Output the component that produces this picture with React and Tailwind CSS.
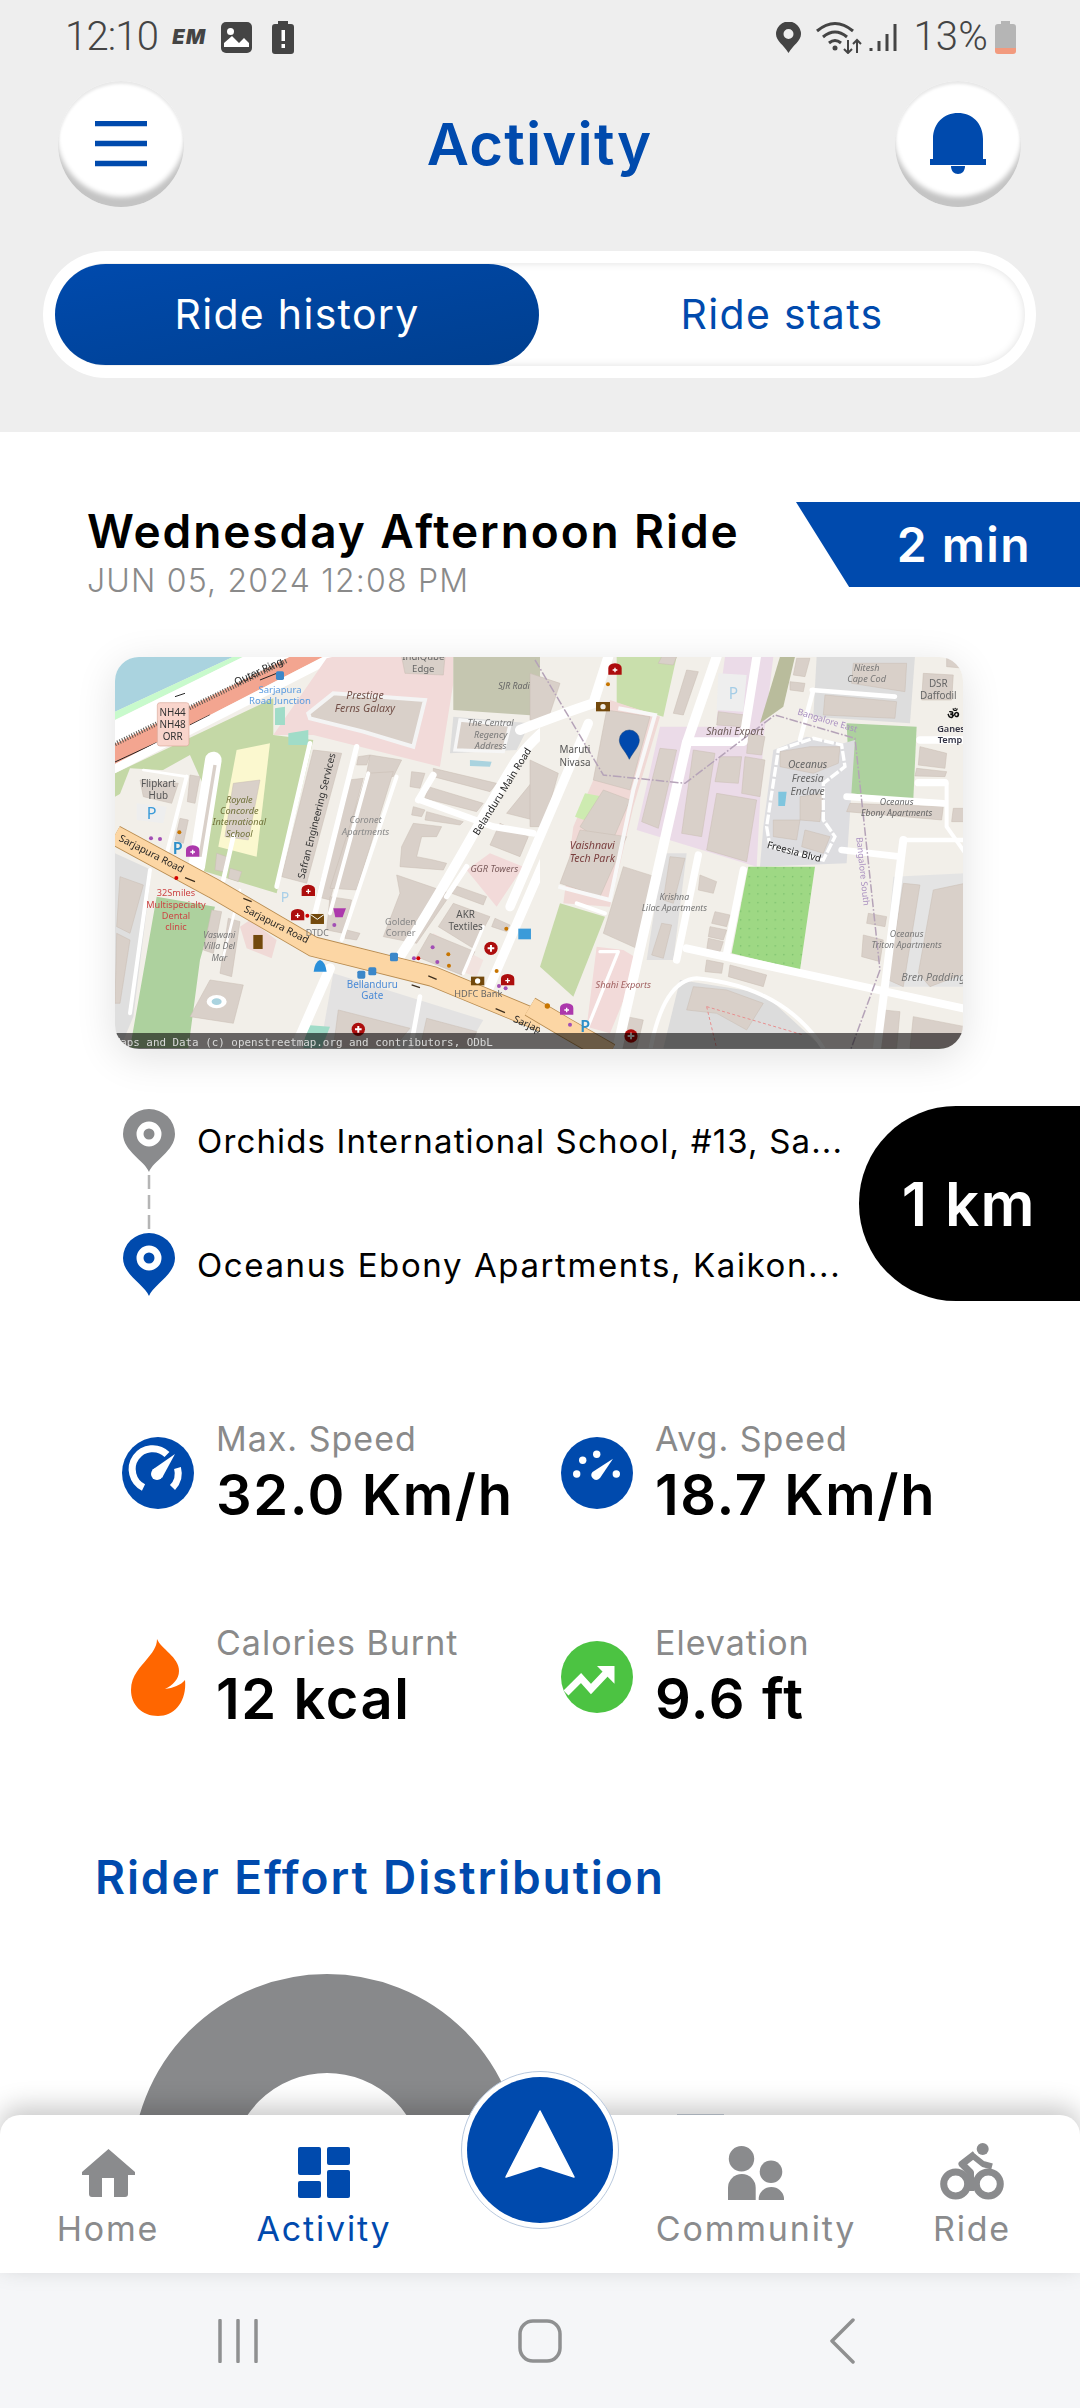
import React from 'react';

const BLUE = '#004aad';

const leftBuildings = [
  '905,50 1035,50 1030,105 915,100',
  '60,710 130,735 90,880 50,860',
  '50,880 90,900 60,1090 45,1090',
  '335,810 365,815 340,940 310,930',
  '385,835 420,845 395,1010 360,1000',
  '330,1020 430,1035 400,1150 270,1130',
  '270,405 300,410 285,490 262,485',
  '240,535 265,540 250,610 225,600',
  '350,640 380,650 370,695 345,690',
  '390,685 425,695 415,725 385,715',
  '120,420 235,430 215,490 130,470',
  '400,430 480,420 445,600 375,590',
  '640,330 725,340 620,730 545,710',
  '775,350 810,345 800,375 770,375',
  '810,345 905,360 880,410 800,400',
  '745,420 790,415 690,780 650,770',
  '800,400 880,395 770,750 690,745',
  '690,770 755,780 730,880 680,870',
  '740,870 780,880 770,900 735,895',
  '935,395 975,400 960,445 930,440',
  '1000,385 1190,430 1170,455 1000,410',
  '985,440 1150,490 1130,515 975,475',
  '940,500 975,510 965,530 935,525',
  '980,515 1090,545 1080,555 975,540',
  '940,550 1025,560 1010,590 965,590 950,650 1000,660 1040,670 1030,690 900,680 905,620',
  '890,705 1050,760 1040,780 950,910 850,890 900,760',
  '1060,790 1170,830 1120,925 1015,860',
  '1060,735 1160,770 1150,795 1055,760',
  '1200,550 1285,590 1260,650 1170,615',
  '1350,360 1350,480 1300,540 1220,520',
  '1185,835 1230,855 1220,875 1175,860',
  '990,880 1125,935 1085,1005 950,950',
  '715,1110 930,1165 880,1225 700,1225',
  '980,1135 1130,1175 1110,1225 960,1225',
];

const rightBuildings = [
  '230,210 360,230 300,450 190,420',
  '220,450 300,480 240,620 150,560',
  '150,570 290,590 210,770 90,730',
  '280,680 375,710 320,925 220,880',
  '395,50 440,50 430,75 385,70',
  '470,90 505,95 460,225 430,220',
  '390,325 440,330 385,565 335,545',
  '490,330 555,340 515,590 455,580',
  '570,350 635,350 625,430 555,425',
  '645,350 705,360 690,470 635,460',
  '560,460 680,480 650,665 530,630',
  '565,215 645,225 635,260 560,255',
  '655,280 705,290 695,345 650,340',
  '800,55 840,55 825,110 790,105',
  '780,125 825,130 820,155 780,150',
  '970,70 1130,70 1125,155 965,130',
  '885,165 1100,185 1095,235 880,225',
  '1180,100 1270,105 1265,180 1175,180',
  '1250,50 1305,50 1305,85 1250,80',
  '750,335 840,320 930,320 925,370 850,400 750,380',
  '810,470 880,460 870,545 810,540',
  '730,540 810,540 800,600 730,590',
  '825,570 900,590 880,640 815,620',
  '420,650 465,655 430,790 400,780',
  '395,850 425,855 400,955 365,945',
  '510,705 560,725 550,760 505,750',
  '555,815 600,825 590,860 545,850',
  '540,860 590,870 580,900 535,890',
  '535,895 580,905 570,935 530,930',
  '530,960 580,970 575,1000 525,995',
  '600,975 710,1005 700,1040 595,1010',
  '1120,730 1170,735 1120,1040 1075,1020',
  '1210,750 1305,730 1305,1000 1200,1040 1165,1000',
  '1015,820 1070,830 1065,860 1010,850',
  '1000,885 1060,900 1050,965 995,950',
  '1170,320 1250,340 1245,385 1165,375',
  '1160,385 1250,395 1245,410 1155,408',
  '960,490 1240,500 1235,540 950,515',
  '1270,505 1305,505 1305,545 1265,545',
  '490,1040 590,1050 700,1090 650,1170 560,1120 470,1110',
  '1060,1110 1110,1115 1100,1225 1050,1225',
  '1150,1130 1305,1160 1305,1225 1140,1225',
  '290,1130 340,1140 320,1225 270,1225',
  '0,100 90,130 50,250 0,240',
  '0,360 85,400 40,560 0,560',
];

const Building = ({ p }) => <polygon points={p} fill="#d9d0c9" stroke="#c8bdb3" strokeWidth="1.5" />;

const Road = ({ d, w = 24 }) => (
  <path d={d} fill="none" stroke="#fff" strokeWidth={w} strokeLinecap="round" strokeLinejoin="round" />
);

const Label = ({ x, y, c = '#777', s = 25, i, r, w, children }) => (
  <text
    x={x}
    y={y}
    fill={c}
    fontSize={s * 1.1}
    fontStyle={i ? 'italic' : 'normal'}
    fontWeight={w}
    textAnchor="middle"
    transform={r ? `rotate(${r} ${x} ${y})` : undefined}
  >
    {children}
  </text>
);

const Cross = ({ x, y, r = 20 }) => (
  <g>
    <circle cx={x} cy={y} r={r} fill="#ad0a0a" />
    <path d={`M${x - 10} ${y}H${x + 10}M${x} ${y - 10}V${y + 10}`} stroke="#fff" strokeWidth="6" />
  </g>
);

const Bag = ({ x, y, c = '#ad0a0a' }) => (
  <g>
    <path d={`M${x - 20} ${y + 16}V${y - 4}Q${x - 20} ${y - 16} ${x} ${y - 18}Q${x + 20} ${y - 16} ${x + 20} ${y - 4}V${y + 16}Z`} fill={c} />
    <path d={`M${x - 7} ${y + 2}H${x + 7}M${x} ${y - 5}V${y + 9}`} stroke="#fff" strokeWidth="4" />
  </g>
);

const Dot = ({ x, y, c = '#a24fb5', r = 6 }) => <circle cx={x} cy={y} r={r} fill={c} />;

const MapArt = () => (
  <svg viewBox="115 657 848 392" width="848" height="392" className="block">
    <defs>
      <filter id="soft"><feGaussianBlur stdDeviation="0.35" /></filter>
      <pattern id="dots" width="26" height="26" patternUnits="userSpaceOnUse">
        <circle cx="8" cy="8" r="2" fill="#6fb866" />
      </pattern>
      <clipPath id="leftClip"><rect x="45" y="50" width="1290" height="1175" /></clipPath>
    </defs>
    <g filter="url(#soft)" fontFamily="'Noto Sans', sans-serif">
      {/* left half, drawn in the coordinates of the left crop */}
      <g transform="translate(100 640) scale(0.3333)" clipPath="url(#leftClip)">
        <rect x="45" y="50" width="1305" height="1175" fill="#f2efe9" />
        <polygon points="45,50 400,50 45,215" fill="#aad3df" />
        <polygon points="400,50 430,50 45,240 45,215" fill="#c8facc" />
        <polygon points="45,400 520,175 520,285 640,300 530,760 300,690 330,480 270,345 45,470" fill="#c4d8a6" />
        <polygon points="90,385 270,395 215,620 45,570 45,500" fill="#f2efe9" />
        <polygon points="410,330 510,310 470,650 355,620" fill="#fbf8cf" />
        <polygon points="430,50 570,50 45,320 45,240" fill="#fff" />
        <polygon points="570,50 670,50 45,372 45,312" fill="#f3a590" />
        <path d="M45,312L560,62" stroke="#59564f" strokeWidth="14" strokeDasharray="3 5" fill="none" />
        <path d="M45,366L170,308M270,255L330,225M480,120L530,100M225,170L255,160" stroke="#222" strokeWidth="3" fill="none" />
        <polygon points="670,50 730,50 45,400 45,372" fill="#fff" />
        <polygon points="520,285 680,55 700,50 1060,50 1060,130 1020,380 640,285" fill="#f2dad9" />
        <polygon points="625,220 700,160 975,180 940,320 790,275 630,235" fill="#d9d0c9" stroke="#f4f4f4" strokeWidth="12" />
        <polygon points="565,280 625,270 625,315 565,315" fill="#a0dcc8" />
        <polygon points="525,205 555,200 555,255 525,255" fill="#a0dcc8" />
        <polygon points="1060,50 1350,50 1350,230 1060,210" fill="#c5c6b0" />
        <polygon points="1060,230 1290,250 1250,330 1050,340" fill="#dddddd" />
        <polygon points="1080,240 1230,255 1210,335 1065,330" fill="#d9d0c9" stroke="#f6f6f6" strokeWidth="10" />
        <polygon points="1110,360 1175,365 1170,380 1110,378" fill="#aad3df" />
        <polygon points="1100,690 1170,640 1270,680 1190,800" fill="#f2dad9" />
        <polygon points="45,640 155,690 100,1130 60,1225 45,1225" fill="#dfdfdf" />
        <polygon points="170,770 345,800 300,960 265,1225 90,1225" fill="#add19e" />
        <polygon points="420,860 450,840 530,900 515,955 440,925" fill="#f0d9d6" />
        <polygon points="700,1000 1150,1140 1100,1225 660,1225" fill="#e3e2e2" />
        <polygon points="620,1155 690,1160 665,1225 610,1225" fill="#a0dcc8" />
        <polygon points="110,490 200,500 190,550 110,540" fill="#eeeeee" />
        <polygon points="1000,880 1150,960 1130,1010 950,950" fill="#f2dad9" opacity="0.6" />
        {leftBuildings.map((p) => <Building key={p} p={p} />)}
        <Road d="M290,680 L340,360" w={50} />
        <path d="M300,650 L345,375" stroke="#d9d0c9" strokeWidth="10" fill="none" />
        <Road d="M400,590 L370,720" w={14} />
        <Road d="M260,410 L190,680" w={12} />
        <Road d="M130,390 L260,410" w={8} />
        <Road d="M630,310 L530,740" w={14} />
        <Road d="M770,320 L640,840" w={16} />
        <Road d="M805,400 L690,820" w={12} />
        <Road d="M890,410 L725,900" w={12} />
        <Road d="M900,950 C1050,720 1150,520 1250,360 C1280,320 1320,280 1360,250" w={30} />
        <Road d="M960,480 L1180,560 L1300,580" w={20} />
        <Road d="M1000,405 L955,480" w={20} />
        <Road d="M1040,770 L1100,680" w={16} />
        <Road d="M1160,1060 L1360,600" w={28} />
        <Road d="M1150,860 L1090,1000" w={10} />
        <Road d="M150,690 L90,1120" w={12} />
        <Road d="M580,1235 L690,985" w={30} />
        <Road d="M930,1235 L960,1070" w={14} />
        <Road d="M420,750 L370,950" w={8} />
        <path d="M45,585 L340,745 L640,920 L1000,1010 L1350,1155 L1500,1240" fill="none" stroke="#b98d52" strokeWidth="62" />
        <path d="M45,585 L340,745 L640,920 L1000,1010 L1350,1155 L1500,1240" fill="none" stroke="#fcd6a4" strokeWidth="57" />
        <path d="M430,775l25,10M960,1043l-25,-8M985,1008l25,10M285,725l-30,-12M1215,1118l-28,-12" stroke="#3d2f1f" strokeWidth="4" fill="none" />

        <Label x={480} y={104} c="#222" s={28} r={-25}>Outer Ring</Label>
        <rect x="172" y="188" width="95" height="130" rx="8" fill="#f9d5cc" stroke="#d9a99a" strokeWidth="2" />
        <Label x={218} y={228} c="#333" s={27}>NH44</Label>
        <Label x={218} y={264} c="#333" s={27}>NH48</Label>
        <Label x={218} y={300} c="#333" s={27}>ORR</Label>
        <Label x={540} y={160} c="#5a9be0" s={26}>Sarjapura</Label>
        <Label x={540} y={193} c="#5a9be0" s={26}>Road Junction</Label>
        <rect x="528" y="94" width="24" height="26" rx="5" fill="#3b87c9" />
        <Label x={795} y={177} c="#735048" s={29} i>Prestige</Label>
        <Label x={795} y={216} c="#735048" s={29} i>Ferns Galaxy</Label>
        <Label x={970} y={60} c="#666" s={26}>IndiQube</Label>
        <Label x={970} y={97} c="#666" s={26}>Edge</Label>
        <Label x={1270} y={148} c="#666" s={24} i>SJR Radiance</Label>
        <Label x={1172} y={258} c="#777" s={25} i>The Central</Label>
        <Label x={1172} y={293} c="#777" s={25} i>Regency</Label>
        <Label x={1172} y={326} c="#777" s={25} i>Address</Label>
        <Label x={1215} y={460} c="#222" s={27} r={-58}>Belanduru Main Road</Label>
        <Label x={175} y={441} c="#555" s={27}>Flipkart</Label>
        <Label x={175} y={477} c="#555" s={27}>Hub</Label>
        <Label x={155} y={537} c="#3a9bd9" s={44}>P</Label>
        <Label x={233} y={642} c="#2d8fc9" s={44} w={600}>P</Label>
        <Bag x={278} y={634} c="#ac39ac" />
        <Dot x={153} y={595} />
        <Dot x={180} y={597} />
        <Dot x={238} y={577} c="#c77400" />
        <Label x={418} y={490} c="#6f7038" s={25} i>Royale</Label>
        <Label x={418} y={523} c="#6f7038" s={25} i>Concorde</Label>
        <Label x={418} y={556} c="#6f7038" s={25} i>International</Label>
        <Label x={418} y={590} c="#6f7038" s={25} i>School</Label>
        <Label x={660} y={530} c="#333" s={27} r={-76}>Safran Engineering Services</Label>
        <Label x={797} y={550} c="#888" s={25} i>Coronet</Label>
        <Label x={797} y={584} c="#888" s={25} i>Apartments</Label>
        <Label x={150} y={650} c="#222" s={27} r={27}>Sarjapura Road</Label>
        <Label x={525} y={862} c="#222" s={27} r={27}>Sarjapura Road</Label>
        <Label x={1300} y={1172} c="#222" s={27} r={24}>Sarjapura</Label>
        <Label x={228} y={768} c="#c44" s={25}>32Smiles</Label>
        <Label x={228} y={803} c="#c44" s={25}>Multispecialty</Label>
        <Label x={228} y={836} c="#c44" s={25}>Dental</Label>
        <Label x={228} y={870} c="#c44" s={25}>clinic</Label>
        <Dot x={229} y={714} c="#d40000" />
        <Label x={358} y={895} c="#777" s={24} i>Vaswani</Label>
        <Label x={358} y={928} c="#777" s={24} i>Villa Del</Label>
        <Label x={358} y={962} c="#777" s={24} i>Mar</Label>
        <rect x="460" y="885" width="28" height="42" fill="#734a08" />
        <ellipse cx="350" cy="1085" rx="30" ry="20" fill="#fff" />
        <ellipse cx="350" cy="1085" rx="15" ry="10" fill="#aad3df" />
        <Bag x={625} y={752} />
        <Bag x={593} y={825} />
        <Dot x={622} y={827} c="#d40000" />
        <rect x="632" y="822" width="40" height="30" fill="#734a08" />
        <path d="M632 824L652 838L672 824" stroke="#fff" strokeWidth="3" fill="none" />
        <path d="M700 805H738L728 832H706Z" fill="#ac39ac" />
        <Dot x={703} y={855} />
        <Label x={652} y={888} c="#777" s={24}>DTDC</Label>
        <Label x={555} y={785} c="#a9cfe8" s={38}>P</Label>
        <Label x={1183} y={696} c="#7a5a5a" s={25} i>GGR Towers</Label>
        <Label x={1097} y={835} c="#555" s={27}>AKR</Label>
        <Label x={1097} y={870} c="#555" s={27}>Textiles</Label>
        <Label x={902} y={855} c="#888" s={25}>Golden</Label>
        <Label x={902} y={889} c="#888" s={25}>Corner</Label>
        <Cross x={1173} y={925} />
        <Cross x={775} y={1168} />
        <Bag x={1223} y={1020} />
        <Dot x={998} y={922} />
        <Dot x={1012} y={966} />
        <Dot x={1045} y={943} c="#c77400" />
        <Dot x={1047} y={977} c="#c77400" />
        <Dot x={942} y={955} />
        <Dot x={955} y={955} c="#d40000" />
        <Dot x={1219} y={866} c="#c77400" />
        <Dot x={1190} y={993} c="#c77400" />
        <Dot x={1197} y={1038} />
        <Dot x={1217} y={1045} />
        <rect x="1255" y="866" width="38" height="32" fill="#3b9bd9" />
        <rect x="1113" y="1010" width="40" height="26" fill="#734a08" />
        <circle cx="1133" cy="1023" r="8" fill="#fff" />
        <Label x={1135} y={1070} c="#666" s={25}>HDFC Bank</Label>
        <rect x="870" y="938" width="24" height="26" rx="5" fill="#3b87c9" />
        <rect x="772" y="992" width="24" height="24" rx="5" fill="#3b87c9" />
        <rect x="805" y="982" width="24" height="24" rx="5" fill="#3b87c9" />
        <Label x={817} y={1043} c="#4a8ad6" s={27}>Bellanduru</Label>
        <Label x={817} y={1077} c="#4a8ad6" s={27}>Gate</Label>
        <path d="M641 995Q645 965 660 960Q676 965 680 995Z" fill="#2a8fd9" />
      </g>

      {/* right half, drawn in the coordinates of the right crop */}
      <g transform="translate(530 640) scale(0.3333)">
        <rect x="30" y="50" width="1275" height="1175" fill="#f2efe9" />
        <polygon points="260,50 440,50 400,230 260,190" fill="#c9dfac" />
        <polygon points="190,420 240,180 390,230 310,500 240,800 100,790 130,560" fill="#f0d9d6" />
        <polygon points="390,260 560,260 690,50 730,50 700,300 680,680 320,570" fill="#ebdbe8" />
        <polygon points="585,50 670,50 650,240 560,240" fill="#ebdbe8" />
        <polygon points="565,100 650,105 640,215 560,210" fill="#eeeeee" />
        <polygon points="750,50 795,50 760,200 690,250" fill="#b9bc9c" />
        <polygon points="860,50 1155,50 1140,250 850,230" fill="#dddddd" />
        <polygon points="950,250 1160,260 1150,480 960,460" fill="#add19e" />
        <polygon points="730,330 830,290 940,310 975,300 950,670 690,680 700,560" fill="#dddde0" />
        <polygon points="655,680 855,680 810,990 605,940" fill="#9ed884" />
        <polygon points="655,680 855,680 810,990 605,940" fill="url(#dots)" />
        <polygon points="165,460 220,470 190,550 135,530" fill="#cdebb0" />
        <polygon points="90,790 225,830 130,1070 30,980" fill="#c6d9a8" />
        <polygon points="200,920 280,930 330,960 240,1180 170,1160" fill="#f2dad9" />
        <polygon points="400,1225 450,1020 700,1060 880,1225" fill="#dcdcdc" />
        <polygon points="1090,710 1305,700 1305,1040 1060,1040" fill="#e4e4e4" />
        <polygon points="400,640 470,640 430,960 350,960" fill="#e0dfdf" />
        {rightBuildings.map((p) => <Building key={p} p={p} />)}
        <polygon points="745,455 770,455 765,498 745,498" fill="#7fc5de" />
        <path d="M745,330 L850,295 L935,315 L945,380 L880,430 L880,540 L915,590 L880,660 L720,620 L710,560 Z" fill="none" stroke="#fff" strokeWidth="10" strokeDasharray="30 6" />
        <path d="M265,205 L375,225 L310,450 L240,780 L85,740" fill="none" stroke="#f8f8f8" strokeWidth="12" />
        <Road d="M-30,270 Q100,220 190,190 L235,50" w={30} />
        <Road d="M-60,800 L175,250" w={28} />
        <Road d="M560,50 L470,310 L260,1235" w={30} />
        <Road d="M680,50 L640,300" w={26} />
        <Road d="M470,305 L640,305" w={26} />
        <Road d="M845,150 L1095,170" w={14} />
        <Road d="M850,150 L810,300" w={14} />
        <Road d="M640,690 L590,940" w={22} />
        <Road d="M505,645 L440,960" w={22} />
        <Road d="M470,925 L1320,1110" w={24} />
        <Road d="M950,470 L1240,490" w={20} />
        <Road d="M935,630 L1110,650" w={20} />
        <Road d="M1120,600 L1040,1235" w={24} />
        <Road d="M1120,600 L1305,600" w={14} />
        <Road d="M1170,300 L1320,300" w={22} />
        <Road d="M1165,428 L1245,428" w={22} />
        <Road d="M1250,430 L1250,560 L1320,660" w={12} />
        <Road d="M360,1235 Q400,1020 500,1015 Q760,1040 880,1225" w={12} />
        <Road d="M140,790 L225,820" w={12} />
        <Road d="M210,935 L265,935 L170,1170" w={10} />
        <path d="M0,1100 L110,1165 L240,1240" fill="none" stroke="#b98d52" strokeWidth="62" />
        <path d="M0,1100 L110,1165 L240,1240" fill="none" stroke="#fcd6a4" strokeWidth="57" />
        <path d="M530,1100 L560,1225 M530,1100 L820,1185" fill="none" stroke="#e78f8f" strokeWidth="3" strokeDasharray="9 7" />
        <path d="M15,60 L220,405 L465,430 L735,225 L975,295 L1050,990 L960,1235" fill="none" stroke="#b5a3b8" strokeWidth="4.5" strokeDasharray="26 6 5 6" />
        <Bag x={255} y={88} />
        <Dot x={234} y={133} c="#c77400" />
        <rect x="198" y="186" width="42" height="28" fill="#734a08" />
        <circle cx="219" cy="200" r="8" fill="#f2efe9" />
        <Label x={610} y={178} c="#a5cde6" s={42}>P</Label>
        <Label x={615} y={285} c="#6b5a57" s={28} i>Shahi Export</Label>
        <Label x={890} y={250} c="#a98fc0" s={24} r={17}>Bangalore East</Label>
        <Label x={1010} y={92} c="#777" s={25} i>Nitesh</Label>
        <Label x={1010} y={125} c="#777" s={25} i>Cape Cod</Label>
        <Label x={1225} y={142} c="#666" s={27}>DSR</Label>
        <Label x={1225} y={178} c="#666" s={27}>Daffodil</Label>
        <Label x={1270} y={238} c="#111" s={34} w={700}>ॐ</Label>
        <Label x={1272} y={276} c="#334" s={25} w={600}>Ganesh</Label>
        <Label x={1272} y={310} c="#334" s={25} w={600}>Temple</Label>
        <Label x={135} y={340} c="#555" s={27}>Maruti</Label>
        <Label x={135} y={378} c="#555" s={27}>Nivasa</Label>
        <Label x={833} y={385} c="#666" s={28} i>Oceanus</Label>
        <Label x={833} y={425} c="#666" s={28} i>Freesia</Label>
        <Label x={833} y={465} c="#666" s={28} i>Enclave</Label>
        <Label x={1100} y={494} c="#666" s={24} i>Oceanus</Label>
        <Label x={1100} y={527} c="#666" s={24} i>Ebony Apartments</Label>
        <Label x={790} y={645} c="#222" s={27} r={15}>Freesia Blvd</Label>
        <Label x={990} y={695} c="#a98fc0" s={24} r={84}>Bangalore South</Label>
        <Label x={187} y={627} c="#7a3e3e" s={29} i>Vaishnavi</Label>
        <Label x={187} y={667} c="#7a3e3e" s={29} i>Tech Park</Label>
        <Label x={433} y={780} c="#777" s={24} i>Krishna</Label>
        <Label x={433} y={813} c="#777" s={24} i>Lilac Apartments</Label>
        <Label x={1130} y={892} c="#777" s={24} i>Oceanus</Label>
        <Label x={1130} y={925} c="#777" s={24} i>Triton Apartments</Label>
        <Label x={1210} y={1022} c="#777" s={29} i>Bren Padding</Label>
        <Label x={280} y={1045} c="#a06060" s={25} i>Shahi Exports</Label>
        <Bag x={110} y={1108} c="#ac39ac" />
        <Dot x={52} y={1098} c="#c77400" r={8} />
        <Dot x={120} y={1154} />
        <Label x={166} y={1176} c="#2d8fc9" s={44} w={600}>P</Label>
        <Cross x={303} y={1188} />
        <path d="M298 358C285 330 268 320 268 300a30 30 0 1 1 60 0C328 320 310 335 298 358Z" fill={BLUE} stroke="#0b3a7a" strokeWidth="1.5" />
      </g>
      <rect x="115" y="1033" width="848" height="16" fill="#000" opacity="0.58" />
      <g transform="translate(100 640) scale(0.3333)">
        <text x="41" y="1217" fill="#d8d8d8" fontSize="32.6" fontFamily="'DejaVu Sans Mono', monospace">Maps and Data (c) openstreetmap.org and contributors, ODbL</text>
      </g>
    </g>
  </svg>
);

const StatusBar = () => (
  <div className="h-[74px] flex items-center justify-between pl-[65px] pr-[64px] font-['Roboto',sans-serif] text-[#444444]">
    <div className="flex items-center">
      <span className="text-[40px] leading-none font-light tracking-[-0.8px]">12:10</span>
      <span className="ml-[14px] w-[38px] text-[20px] font-black italic leading-none tracking-[1.5px] font-['Inter',sans-serif]">EM</span>
      <svg width="31" height="31" viewBox="0 0 31 31" className="ml-[11px]">
        <rect width="31" height="31" rx="5" fill="#444" />
        <circle cx="9.500" cy="9.500" r="3.500" fill="#fff" />
        <path d="M3 23V21L11 14L18 21L23 16L28 21V26H3Z" fill="#fff" />
        <rect x="3" y="25" width="25" height="2" fill="#444" />
      </svg>
      <svg width="22" height="33" viewBox="0 0 22 33" className="ml-[20px]">
        <path d="M6 0H16V3H19Q22 3 22 6V30Q22 33 19 33H3Q0 33 0 30V6Q0 3 3 3H6Z" fill="#444" />
        <rect x="9.500" y="9" width="3.500" height="11" fill="#fff" />
        <rect x="9.500" y="23" width="3.500" height="4" fill="#fff" />
      </svg>
    </div>
    <div className="flex items-center">
      <svg width="25" height="31" viewBox="0 0 25 31">
        <path fillRule="evenodd" d="M12.500 31C8 23 0 19 0 12a12.500 12.500 0 0 1 25 0c0 7-8 11-12.500 19ZM12.500 7a5 5 0 1 0 0 10a5 5 0 0 0 0-10Z" fill="#444" />
      </svg>
      <svg width="46" height="34" viewBox="0 0 46 34" className="ml-[15px]">
        <path d="M1 11Q19-4 37 11M7 17Q19 7 31 17M13 23Q19 18 25 23" fill="none" stroke="#444" strokeWidth="3" />
        <circle cx="19" cy="28" r="2.500" fill="#444" />
        <path d="M32 20V33M28 29L32 33L36 29M41 33V20M37 24L41 20L45 24" fill="none" stroke="#444" strokeWidth="2" />
      </svg>
      <svg width="31" height="30" viewBox="0 0 31 30" className="ml-[7px]">
        <path d="M2 26V29M10 19V29M18 12V29M26 2V29" stroke="#444" strokeWidth="3" />
      </svg>
      <span className="ml-[13px] text-[40px] leading-none font-light tracking-[0.2px]">13%</span>
      <svg width="21" height="33" viewBox="0 0 21 33" className="ml-[7px]">
        <path d="M6 0H15V3H18Q21 3 21 6V27H0V6Q0 3 3 3H6Z" fill="#b5b5b5" />
        <path d="M0 27H21V30Q21 33 18 33H3Q0 33 0 30Z" fill="#f29a7e" />
      </svg>
    </div>
  </div>
);

const RoundButton = ({ children }) => (
  <button className="w-[126px] h-[126px] rounded-full bg-white flex items-center justify-center shadow-[inset_0_-12px_5px_-2px_#c4c4c4,inset_0_3px_3px_#e8e8e8]">
    {children}
  </button>
);

const Pin = ({ color }) => (
  <svg width="52" height="63" viewBox="0 0 52 63" className="shrink-0">
    <path d="M26 63C22 52 0 42 0 25a26 25 0 0 1 52 0C52 42 30 52 26 63Z" fill={color} />
    <circle cx="26" cy="25" r="9" fill="none" stroke="#fff" strokeWidth="7" />
  </svg>
);

const MaxSpeedIcon = () => (
  <svg width="72" height="72" viewBox="0 0 72 72">
    <circle cx="36" cy="36" r="36" fill={BLUE} />
    <path d="M21.500 50.500A20.500 20.500 0 1 1 45 17.500" fill="none" stroke="#fff" strokeWidth="7" />
    <path d="M55.500 31A20.500 20.500 0 0 1 50.500 50.500" fill="none" stroke="#fff" strokeWidth="7" />
    <circle cx="35" cy="37" r="6" fill="#fff" />
    <path d="M53 17L40 41L30 33Z" fill="#fff" />
  </svg>
);

const AvgSpeedIcon = () => (
  <svg width="72" height="72" viewBox="0 0 72 72">
    <circle cx="36" cy="36" r="36" fill={BLUE} />
    <circle cx="35.700" cy="17.300" r="3.700" fill="#fff" />
    <circle cx="21.700" cy="23.300" r="3.700" fill="#fff" />
    <circle cx="15.700" cy="37" r="3.700" fill="#fff" />
    <circle cx="55.300" cy="37" r="3.700" fill="#fff" />
    <path d="M52 21.700L39 41Q35 45 31.500 41Q29 38 31.500 35Z" fill="#fff" />
  </svg>
);

const FlameIcon = () => (
  <svg width="55" height="77" viewBox="0 0 55 77">
    <path d="M26 0C30 10 48 18 48 32C48 40 42 46 34 50C42 49 50 46 54 41C56 62 44 77 27 77C11 77 0 66 0 51C0 36 10 28 16 20C21 14 26 8 26 0Z" fill="#ff6600" />
  </svg>
);

const ElevationIcon = () => (
  <svg width="72" height="72" viewBox="0 0 72 72">
    <circle cx="36" cy="36" r="36" fill="#4cc342" />
    <path d="M5 52L20 37L30 48L47 30" fill="none" stroke="#fff" strokeWidth="7" />
    <path d="M36 25H53.500V42.700Z" fill="#fff" />
  </svg>
);

const Stat = ({ icon, label, value }) => (
  <div className="flex items-center">
    <div className="w-[72px] flex justify-center shrink-0">{icon}</div>
    <div className="ml-[22px]">
      <div className="text-[34px] leading-[40px] text-[#8a8a8a] tracking-[1px]">{label}</div>
      <div className="mt-[4px] text-[56px] leading-[64px] font-semibold text-black tracking-[1.6px]">{value}</div>
    </div>
  </div>
);

const NavItem = ({ icon, label, active }) => (
  <div className={`flex flex-col items-center ${active ? 'text-[#004aad]' : 'text-[#8a8b8d]'}`}>
    <div className="h-[60px] flex items-end justify-center">{icon}</div>
    <span className="mt-[9px] text-[34px] leading-[40px] tracking-[1.8px]">{label}</span>
  </div>
);

const HomeIcon = () => (
  <svg width="53" height="48" viewBox="0 0 53 48" className="mb-[3px]">
    <path fillRule="evenodd" d="M26.500 0L53 23V26H46V45Q46 48 43 48H10Q7 48 7 45V26H0V23ZM20 29V48H32V29Z" fill="currentColor" />
  </svg>
);

const ActivityIcon = () => (
  <svg width="52" height="51" viewBox="0 0 52 51" className="mb-[2px]">
    <rect width="23" height="28" rx="2" fill="currentColor" />
    <rect x="29" width="23" height="18" rx="2" fill="currentColor" />
    <rect y="34" width="23" height="17" rx="2" fill="currentColor" />
    <rect x="29" y="23" width="23" height="28" rx="2" fill="currentColor" />
  </svg>
);

const CommunityIcon = () => (
  <svg width="57" height="54" viewBox="0 0 57 54">
    <circle cx="13.500" cy="12.700" r="12.700" fill="currentColor" />
    <path d="M0 54V42A13.800 14 0 0 1 27.700 42V54Z" fill="currentColor" />
    <circle cx="43" cy="25.700" r="11.300" fill="currentColor" />
    <path d="M30.700 54V52A12.700 12 0 0 1 56 52V54Z" fill="currentColor" />
  </svg>
);

const RideIcon = () => (
  <svg width="64" height="57" viewBox="0 0 64 57">
    <circle cx="15.700" cy="41" r="12" fill="none" stroke="currentColor" strokeWidth="7" />
    <circle cx="48.300" cy="41" r="12" fill="none" stroke="currentColor" strokeWidth="7" />
    <circle cx="42.700" cy="6" r="6" fill="currentColor" />
    <path d="M35 11L22 21L30.500 29.500V48" fill="none" stroke="currentColor" strokeWidth="7" strokeLinejoin="round" />
    <path d="M33 13L43 21L52 23.500" fill="none" stroke="currentColor" strokeWidth="6" strokeLinejoin="round" />
  </svg>
);

export default function App() {
  return (
    <div className="relative w-[1080px] h-[2408px] overflow-hidden flex flex-col bg-white font-['Inter',sans-serif]">
      <header className="h-[432px] shrink-0 bg-[#eeeeee]">
        <StatusBar />
        <div className="mt-[7px] flex items-center justify-between pl-[58px] pr-[59px]">
          <RoundButton>
            <svg width="52" height="46" viewBox="0 0 52 46" className="mb-[1px]">
              <path d="M0 2.500H52M0 22.500H52M0 42.500H52" stroke={BLUE} strokeWidth="5.500" />
            </svg>
          </RoundButton>
          <h1 className="text-[58px] leading-none font-semibold text-[#004aad] tracking-[1.2px]">Activity</h1>
          <RoundButton>
            <svg width="56" height="61" viewBox="0 0 56 61" className="mb-[2px]">
              <path d="M3 46V26C3 10 14 0 28 0C42 0 53 10 53 26V46H56V52H0V46Z" fill={BLUE} />
              <path d="M21 53H35C35 58 32 61 28 61C24 61 21 58 21 53Z" fill={BLUE} />
            </svg>
          </RoundButton>
        </div>
        <div className="mt-[44px] ml-[43px] w-[993px] h-[127px] rounded-full bg-white py-[12px] pl-[12px] pr-[11px]">
          <div className="flex h-[103px] rounded-full shadow-[inset_0_0_9px_rgba(0,0,0,0.13)]">
            <div className="w-[484px] h-[101px] mt-[1px] rounded-full flex items-center justify-center bg-gradient-to-br from-[#004aad] to-[#003f8f] text-white text-[41px] tracking-[1.3px]">
              Ride history
            </div>
            <div className="flex-1 flex items-center justify-center text-[#004aad] text-[41px] tracking-[1.3px]">
              Ride stats
            </div>
          </div>
        </div>
      </header>

      <main className="flex-1 min-h-0 overflow-hidden">
        <div className="mt-[70px] flex items-start justify-between">
          <div className="ml-[87px]">
            <div className="text-[46px] leading-[58px] font-semibold text-black tracking-[1.9px]">Wednesday Afternoon Ride</div>
            <div className="text-[32px] leading-[40px] mt-[1px] font-light text-[#8a8a8a] tracking-[1.2px]">JUN 05, 2024 12:08 PM</div>
          </div>
          <div className="w-[284px] h-[85px] bg-[#004aad] [clip-path:polygon(0_0,100%_0,100%_100%,18.7%_100%)] flex items-center justify-end pr-[49px] text-white text-[48px] font-semibold tracking-[1.4px]">
            2 min
          </div>
        </div>

        <div className="mt-[56px] ml-[115px] w-[848px] h-[392px] rounded-[24px] overflow-hidden shadow-[0_8px_40px_rgba(0,0,0,0.12)]">
          <MapArt />
        </div>

        <div className="mt-[57px] flex items-start justify-between">
          <div className="ml-[123px] mt-[3px]">
            <div className="flex items-center gap-[22px]">
              <Pin color="#8a8b8d" />
              <span className="text-[33px] leading-[40px] text-black tracking-[1.15px]">Orchids International School, #13, Sa...</span>
            </div>
            <svg width="52" height="61" viewBox="0 0 52 61" className="block">
              <path d="M26 3V61" stroke="#b5b5b5" strokeWidth="2.500" strokeDasharray="14 6" />
            </svg>
            <div className="flex items-center gap-[22px]">
              <Pin color="#004aad" />
              <span className="text-[33px] leading-[40px] text-black tracking-[1.6px]">Oceanus Ebony Apartments, Kaikon...</span>
            </div>
          </div>
          <div className="w-[221px] h-[195px] rounded-l-[97px] bg-black flex items-center justify-end pr-[44px] text-white text-[60px] font-semibold tracking-[1.4px]">
            1 km
          </div>
        </div>

        <div className="mt-[118px] ml-[122px] grid grid-cols-[439px_1fr] gap-y-[96px]">
          <Stat icon={<MaxSpeedIcon />} label="Max. Speed" value="32.0 Km/h" />
          <Stat icon={<AvgSpeedIcon />} label="Avg. Speed" value="18.7 Km/h" />
          <Stat icon={<FlameIcon />} label="Calories Burnt" value="12 kcal" />
          <Stat icon={<ElevationIcon />} label="Elevation" value="9.6 ft" />
        </div>

        <h2 className="mt-[116px] ml-[95px] text-[46px] leading-[60px] font-semibold text-[#004aad] tracking-[1.9px]">
          Rider Effort Distribution
        </h2>

        <div className="mt-[67px] ml-[132px] flex items-start">
          <svg width="390" height="390" viewBox="0 0 390 390" className="shrink-0">
            <circle cx="195" cy="195" r="145.500" fill="none" stroke="#88898b" strokeWidth="99" />
          </svg>
          <div className="ml-[155px] mt-[140px] w-[47px] h-[20px] bg-[#c5ced8]" />
        </div>
      </main>

      <nav className="relative z-10 h-[158px] shrink-0 bg-white rounded-t-[20px] shadow-[0_-8px_26px_rgba(0,0,0,0.22)] grid grid-cols-5 items-start pt-[25px]">
        <NavItem icon={<HomeIcon />} label="Home" />
        <NavItem icon={<ActivityIcon />} label="Activity" active />
        <div />
        <NavItem icon={<CommunityIcon />} label="Community" />
        <NavItem icon={<RideIcon />} label="Ride" />
        <div className="absolute left-[461px] top-[-44px] w-[158px] h-[158px] rounded-full bg-white border border-[#b9c9de] flex items-center justify-center">
          <div className="w-[146px] h-[146px] rounded-full bg-[#004aad] flex items-center justify-center">
            <svg width="74" height="72" viewBox="0 0 74 72" className="mb-[11px]">
              <path d="M37 2L71 68L37 57L3 68Z" fill="#fff" stroke="#fff" strokeWidth="1.500" strokeLinejoin="round" />
            </svg>
          </div>
        </div>
      </nav>

      <div className="h-[135px] shrink-0 bg-[#f5f6f8] flex items-center justify-center">
        <div className="w-[302px] flex justify-center">
          <svg width="40" height="44" viewBox="0 0 40 44">
            <path d="M2 1.500V42.500M20 1.500V42.500M38 1.500V42.500" stroke="#8f9091" strokeWidth="3.500" strokeLinecap="round" />
          </svg>
        </div>
        <div className="w-[302px] flex justify-center">
          <svg width="44" height="44" viewBox="0 0 44 44">
            <rect x="2" y="2" width="40" height="40" rx="13" fill="none" stroke="#8f9091" strokeWidth="3.500" />
          </svg>
        </div>
        <div className="w-[302px] flex justify-center">
          <svg width="26" height="46" viewBox="0 0 26 46">
            <path d="M24 2L3 23L24 44" fill="none" stroke="#8f9091" strokeWidth="3.500" strokeLinecap="round" strokeLinejoin="round" />
          </svg>
        </div>
      </div>
    </div>
  );
}
